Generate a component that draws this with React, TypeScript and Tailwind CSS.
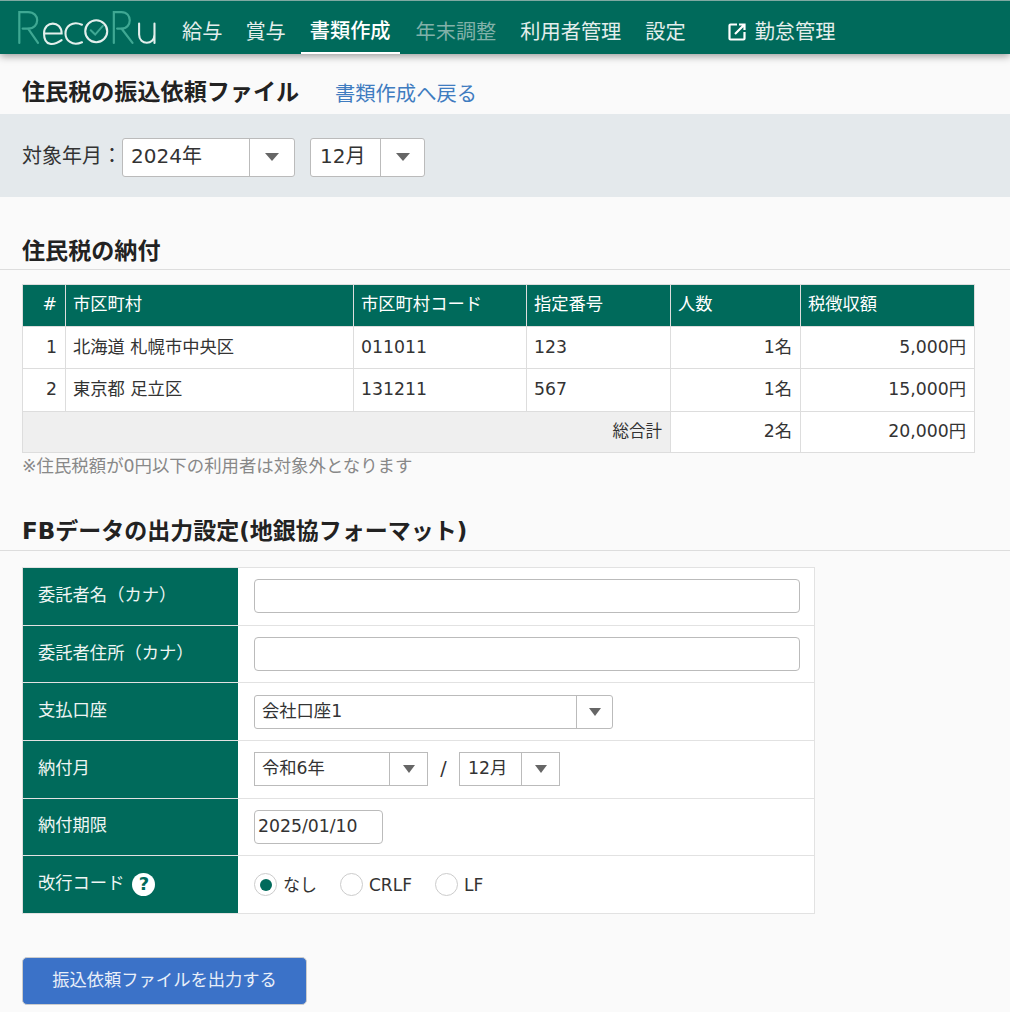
import React from "react";

const FONT = "[font-family:'DejaVu_Sans','Noto_Sans_CJK_JP',sans-serif]";

function Select({ value, w, btn, h, text, pl, radius, caret }: { value: string; w: string; btn: string; h: string; text: string; pl: string; radius: string; caret: string }) {
  return (
    <div className={`flex bg-white border border-[#bbb] ${w} ${h} ${radius}`}>
      <div className={`flex-1 flex items-center text-[#333] ${text} ${pl}`}>{value}</div>
      <div className={`flex items-center justify-center border-l border-[#bbb] ${btn}`}>
        <span className={`block w-0 h-0 border-x-transparent border-t-[#666] ${caret}`} />
      </div>
    </div>
  );
}

function Radio({ checked, label }: { checked?: boolean; label: string }) {
  return (
    <div className="flex items-center gap-[6px]">
      <span className="flex items-center justify-center w-[23px] h-[23px] rounded-full bg-white border border-[#ccc]">
        {checked && <span className="block w-[12px] h-[12px] rounded-full bg-[#006a5b]" />}
      </span>
      <span className="text-[17px] leading-[24px] text-[#333]">{label}</span>
    </div>
  );
}

const bigCaret = "border-x-[7px] border-t-[8px]";
const smallCaret = "border-x-[6px] border-t-[8px]";

const formRows: { label: React.ReactNode; body: React.ReactNode }[] = [
  { label: "委託者名（カナ）", body: <div className="h-[34px] w-[546px] bg-white border border-[#bbb] rounded-[4px]" /> },
  { label: "委託者住所（カナ）", body: <div className="h-[34px] w-[546px] bg-white border border-[#bbb] rounded-[4px]" /> },
  {
    label: "支払口座",
    body: <Select value="会社口座1" w="w-[359px]" btn="w-[36px]" h="h-[34px]" text="text-[17.3px]" pl="pl-[7px]" radius="rounded-[3px]" caret={smallCaret} />,
  },
  {
    label: "納付月",
    body: (
      <div className="flex items-center">
        <Select value="令和6年" w="w-[174px]" btn="w-[38px]" h="h-[34px]" text="text-[17.3px]" pl="pl-[7px]" radius="rounded-none" caret={smallCaret} />
        <span className="w-[31px] text-center text-[19px] text-[#333] pb-[2px]">/</span>
        <Select value="12月" w="w-[101px]" btn="w-[38px]" h="h-[34px]" text="text-[17.3px]" pl="pl-[8px]" radius="rounded-none" caret={smallCaret} />
      </div>
    ),
  },
  {
    label: "納付期限",
    body: (
      <div className="h-[34px] w-[129px] bg-white border border-[#bbb] rounded-[4px] flex items-center pl-[3px] text-[17.3px] text-[#333]">2025/01/10</div>
    ),
  },
  {
    label: (
      <span className="flex items-center gap-[8px]">
        改行コード
        <span className="flex items-center justify-center w-[23px] h-[23px] rounded-full bg-white text-[#006a5b] text-[18px] font-bold leading-none">?</span>
      </span>
    ),
    body: (
      <div className="flex items-center gap-[23px]">
        <Radio checked label="なし" />
        <Radio label="CRLF" />
        <Radio label="LF" />
      </div>
    ),
  },
];

const th = "h-[42px] border border-[#ddd] bg-[#006a5b] text-white font-normal text-left pl-[7px] pr-[8px] pb-[2px] text-[17.3px]";
const td = "border border-[#ddd] bg-white pl-[7px] pr-[8px] text-[17.3px] text-[#333] font-normal";

export default function App() {
  return (
    <div className={`w-[1010px] h-[1012px] overflow-hidden bg-[#fafafa] ${FONT}`}>
      <header className="relative z-10 h-[54px] bg-[#006a5b] border-t border-[#7fa9a2] shadow-[0_2px_8px_rgba(0,0,0,0.4)] flex items-stretch">
        <div className="w-[182px] shrink-0 pl-[16px] pt-[5px]">
          <svg width="144" height="40" viewBox="0 0 131 36.4" fill="none" strokeLinecap="round">
            <path d="M3 33.6V5.5h8c11 0 11 15 0 15H6M11 20.5l9 13" stroke="#3fa893" strokeWidth="2" />
            <path d="M25.5 25h16c0-12-16-12-16 0s9 11 16 6" stroke="#e3efec" strokeWidth="1.9" />
            <path d="M60 17c-9-4-15 2-15 8s6 12 15 8" stroke="#e3efec" strokeWidth="1.9" />
            <circle cx="73" cy="23" r="10" stroke="#e3efec" strokeWidth="1.9" />
            <path d="M68 22l4 4 7-8" stroke="#3fa893" strokeWidth="1.8" />
            <path d="M89 33.6V5.5h7c10 0 10 15 0 15h-4M96 20.5l10 13" stroke="#3fa893" strokeWidth="2" />
            <path d="M112 16v10c0 10 14 10 14 0v-10M126 16v17.6" stroke="#e3efec" strokeWidth="1.9" />
          </svg>
        </div>
        <nav className="flex items-stretch text-[20.2px] text-[#e4eeec]">
          <a className="flex items-center pt-[9px] mr-[23px]">給与</a>
          <a className="flex items-center pt-[9px] mr-[15px]">賞与</a>
          <a className="flex items-center pt-[9px] px-[9px] mr-[16px] font-medium text-white border-b-2 border-white">書類作成</a>
          <a className="flex items-center pt-[9px] mr-[24px] text-[#82b1a9]">年末調整</a>
          <a className="flex items-center pt-[9px] mr-[24px]">利用者管理</a>
          <a className="flex items-center pt-[9px] mr-[41px]">設定</a>
          <a className="flex items-center pt-[9px] gap-[8px]">
            <svg width="20" height="20" viewBox="0 0 20 20" fill="none" stroke="#fff" strokeWidth="2.2">
              <path d="M10 2.5H3.5a1 1 0 0 0-1 1v13a1 1 0 0 0 1 1h13a1 1 0 0 0 1-1V10" />
              <path d="M8 12L17 3M12 2.5h5.5V8" />
            </svg>
            勤怠管理
          </a>
        </nav>
      </header>

      <div className="h-[60px] flex items-center pl-[22px] pt-[17px] pb-[1px]">
        <h1 className="text-[23.1px] font-bold text-[#222] w-[313px]">住民税の振込依頼ファイル</h1>
        <a className="text-[20.3px] text-[#3f7cc0] mt-[4px]">書類作成へ戻る</a>
      </div>

      <div className="h-[83px] bg-[#e4e9ec] flex items-center pl-[22px] pt-[3px]">
        <span className="text-[20px] text-[#333] w-[100px] mb-[3px]">対象年月：</span>
        <Select value="2024年" w="w-[173px]" btn="w-[45px]" h="h-[39px]" text="text-[20px] pb-[3px]" pl="pl-[8px]" radius="rounded-[3px]" caret={bigCaret} />
        <div className="w-[15px]" />
        <Select value="12月" w="w-[115px]" btn="w-[44px]" h="h-[39px]" text="text-[20px] pb-[3px]" pl="pl-[9px]" radius="rounded-[3px]" caret={bigCaret} />
      </div>

      <section className="mt-[37px]">
        <h2 className="pl-[22px] h-[36px] text-[23.1px] leading-[34px] font-bold text-[#222] border-b border-[#ddd]">住民税の納付</h2>
        <table className="ml-[22px] mt-[14px] w-[952px] table-fixed border-collapse">
          <colgroup>
            <col className="w-[43px]" />
            <col className="w-[288px]" />
            <col className="w-[173px]" />
            <col className="w-[144px]" />
            <col className="w-[130px]" />
            <col className="w-[174px]" />
          </colgroup>
          <thead>
            <tr>
              <th className={`${th} text-right`}>#</th>
              <th className={th}>市区町村</th>
              <th className={th}>市区町村コード</th>
              <th className={th}>指定番号</th>
              <th className={th}>人数</th>
              <th className={th}>税徴収額</th>
            </tr>
          </thead>
          <tbody>
            <tr className="h-[42px]">
              <td className={`${td} text-right`}>1</td>
              <td className={td}>北海道 札幌市中央区</td>
              <td className={td}>011011</td>
              <td className={td}>123</td>
              <td className={`${td} text-right`}>1名</td>
              <td className={`${td} text-right`}>5,000円</td>
            </tr>
            <tr className="h-[43px]">
              <td className={`${td} text-right`}>2</td>
              <td className={td}>東京都 足立区</td>
              <td className={td}>131211</td>
              <td className={td}>567</td>
              <td className={`${td} text-right`}>1名</td>
              <td className={`${td} text-right`}>15,000円</td>
            </tr>
            <tr className="h-[41px]">
              <td colSpan={4} className="border border-[#ddd] bg-[#efefef] px-[8px] text-right text-[16.5px] text-[#333]">総合計</td>
              <td className={`${td} text-right`}>2名</td>
              <td className={`${td} text-right`}>20,000円</td>
            </tr>
          </tbody>
        </table>
        <p className="pl-[22px] mt-[1px] text-[17.4px] leading-[24px] text-[#888]">※住民税額が0円以下の利用者は対象外となります</p>
      </section>

      <section className="mt-[37px]">
        <h2 className="pl-[22px] h-[36px] text-[23px] leading-[32px] font-bold text-[#222] border-b border-[#ddd]">FBデータの出力設定(地銀協フォーマット)</h2>
        <div className="ml-[22px] mt-[16px] w-[793px] border-t border-r border-[#e2e2e2]">
          {formRows.map((r, i) => (
            <div key={i} className="flex h-[57.67px] border-b border-[#e2e2e2]">
              <div className="w-[216px] shrink-0 bg-[#006a5b] flex items-center pl-[15px] pb-[1px] text-[17.3px] text-[#eef5f3] border-l border-[#ddd]">{r.label}</div>
              <div className="flex-1 bg-white flex items-center pl-[16px]">{r.body}</div>
            </div>
          ))}
        </div>
      </section>

      <button className="ml-[22px] mt-[43px] w-[285px] h-[48px] bg-[#3b72c8] border border-[#ccc] rounded-[5px] text-[17.3px] text-[#e8eef8] flex items-center justify-center">
        振込依頼ファイルを出力する
      </button>
    </div>
  );
}
